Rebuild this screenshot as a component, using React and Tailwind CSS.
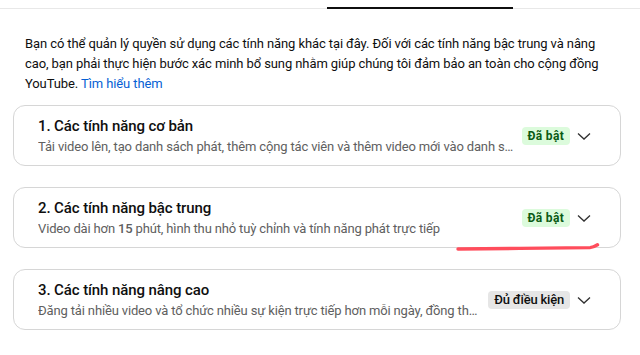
import React from "react";

function Chevron() {
  return (
    <svg width="24" height="24" viewBox="0 0 24 24" className="shrink-0" fill="none">
      <path d="M6 9.5 L12 15 L18 9.5" stroke="#303030" strokeWidth="1.3" strokeLinejoin="miter" />
    </svg>
  );
}

function Card({ title, subtitle, badge, badgeKind, children }) {
  return (
    <div className="relative flex items-center rounded-[12px] border border-[#d6d6d6] bg-white pl-6 pr-6 pt-[9px] pb-2">
      <div className="min-w-0 flex-1">
        <div className="text-[15px] leading-[22px] font-medium tracking-[-0.1px] text-[#0f0f0f]">{title}</div>
        <div className="truncate text-[13px] leading-[20px] tracking-[-0.15px] text-[#606060]">{subtitle}</div>
      </div>
      <div className="ml-1 flex shrink-0 items-center gap-[2px]">
        {badgeKind === "green" ? (
          <span className="rounded-[4px] bg-[#dcfbdc] px-[6px] text-[12px] leading-[18px] font-bold tracking-[0.3px] text-[#0b5a14]">
            {badge}
          </span>
        ) : (
          <span className="rounded-[4px] bg-[#e6e6e6] px-[6px] text-[13px] leading-[18px] font-medium tracking-[-0.2px] text-[#0f0f0f]">
            {badge}
          </span>
        )}
        <Chevron />
      </div>
      {children}
    </div>
  );
}

export default function App() {
  return (
    <div className="h-[355px] w-[640px] overflow-hidden bg-white font-['Roboto',sans-serif]">
      <div className="flex h-[9px] items-end border-b border-[#e8e8e8]">
        <div className="w-[327px]" />
        <div className="mb-[-1px] h-[2px] w-[186px] bg-[#0f0f0f]" />
      </div>
      <div className="pl-[13px] pr-[19px]">
        <p className="mt-[25px] mb-[11px] px-3 text-[13px] leading-[20px] tracking-[-0.1px] text-[#0f0f0f]">
          Bạn có thể quản lý quyền sử dụng các tính năng khác tại đây. Đối với các tính năng bậc trung và nâng
          cao, bạn phải thực hiện bước xác minh bổ sung nhằm giúp chúng tôi đảm bảo an toàn cho cộng đồng
          YouTube. <span className="text-[#065fd4]">Tìm hiểu thêm</span>
        </p>
        <div className="flex flex-col gap-[21px]">
          <Card
            title="1. Các tính năng cơ bản"
            subtitle="Tải video lên, tạo danh sách phát, thêm cộng tác viên và thêm video mới vào danh sách phát do nhiều người cùng tạo"
            badge="Đã bật"
            badgeKind="green"
          />
          <Card
            title="2. Các tính năng bậc trung"
            subtitle={
              <>
                Video dài hơn <span className="font-medium">15</span> phút, hình thu nhỏ tuỳ chỉnh và tính năng phát trực tiếp
              </>
            }
            badge="Đã bật"
            badgeKind="green"
          >
            <svg
              className="pointer-events-none absolute left-[442px] top-[53px]"
              width="144"
              height="11"
              viewBox="0 0 144 11"
              fill="none"
            >
              <path
                d="M2 8 C 40 7.4, 100 7.2, 134 6.6 C 137 6.5, 139 5.3, 141.5 3.8"
                stroke="#ff4d5c"
                strokeWidth="3.4"
                strokeLinecap="round"
              />
            </svg>
          </Card>
          <Card
            title="3. Các tính năng nâng cao"
            subtitle="Đăng tải nhiều video và tổ chức nhiều sự kiện trực tiếp hơn mỗi ngày, đồng thời có thể kháng nghị khi bị hạn chế"
            badge="Đủ điều kiện"
            badgeKind="gray"
          />
        </div>
      </div>
    </div>
  );
}
